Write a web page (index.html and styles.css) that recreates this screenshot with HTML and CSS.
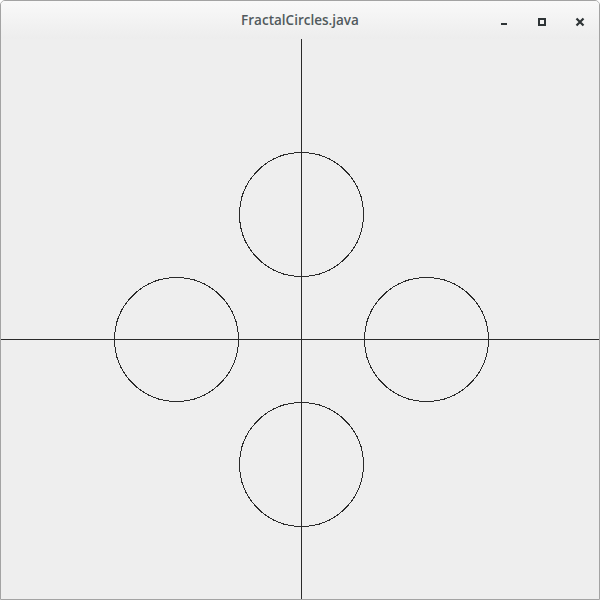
FILE: index.html
```html
<!DOCTYPE html>
<html>
<head>
<meta charset="utf-8" />
<title>FractalCircles.java</title>
<link rel="stylesheet" href="styles.css">
</head>
<body>
	<div class="window">
		<div class="titlebar">
			<span></span>
			<span class="title">FractalCircles.java</span>
			<span class="controls">
				<svg class="btn" width="38" height="38" viewBox="0 0 38 38" aria-hidden="true">
					<rect x="16" y="22" width="6" height="2" fill="#2e3436"/>
				</svg>
				<svg class="btn" width="38" height="38" viewBox="0 0 38 38" aria-hidden="true">
					<rect x="16" y="18" width="6" height="6" fill="none" stroke="#2e3436" stroke-width="2"/>
				</svg>
				<svg class="btn" width="38" height="38" viewBox="0 0 38 38" aria-hidden="true">
					<path d="M15.5 17.5 L22.5 24.5 M22.5 17.5 L15.5 24.5" stroke="#2e3436" stroke-width="2.2" fill="none"/>
				</svg>
			</span>
		</div>
		<svg class="canvas" width="598" height="560" viewBox="0 0 598 560">
			<!-- axes -->
			<line x1="300.5" y1="0" x2="300.5" y2="560" />
			<line x1="0" y1="300.5" x2="598" y2="300.5" />
			<!-- circles -->
			<circle cx="300.5" cy="175.5" r="62" />
			<circle cx="175.5" cy="300.5" r="62" />
			<circle cx="425.5" cy="300.5" r="62" />
			<circle cx="300.5" cy="425.5" r="62" />
		</svg>
	</div>
</body>
</html>
```

FILE: styles.css
```css
html, body {
	margin: 0;
	padding: 0;
	background: #ffffff;
}

.window {
	width: 600px;
	height: 600px;
	box-sizing: border-box;
	border: 1px solid #a3a3a3;
	border-radius: 5px 5px 0 0;
	background: #eeeeee;
	overflow: hidden;
}

.titlebar {
	height: 38px;
	display: grid;
	grid-template-columns: 1fr auto 1fr;
	align-items: center;
	background: linear-gradient(to bottom, #f9f9f9, #ededed);
}

.title {
	font-family: "Open Sans", sans-serif;
	font-weight: 600;
	font-size: 13.5px;
	color: #515a5d;
}

.controls {
	justify-self: end;
	display: flex;
}

.btn {
	display: block;
}

.canvas {
	display: block;
}
.canvas line,
.canvas circle {
	stroke: #2a2a2a;
	stroke-width: 1;
	fill: none;
	shape-rendering: crispEdges;
}
```
